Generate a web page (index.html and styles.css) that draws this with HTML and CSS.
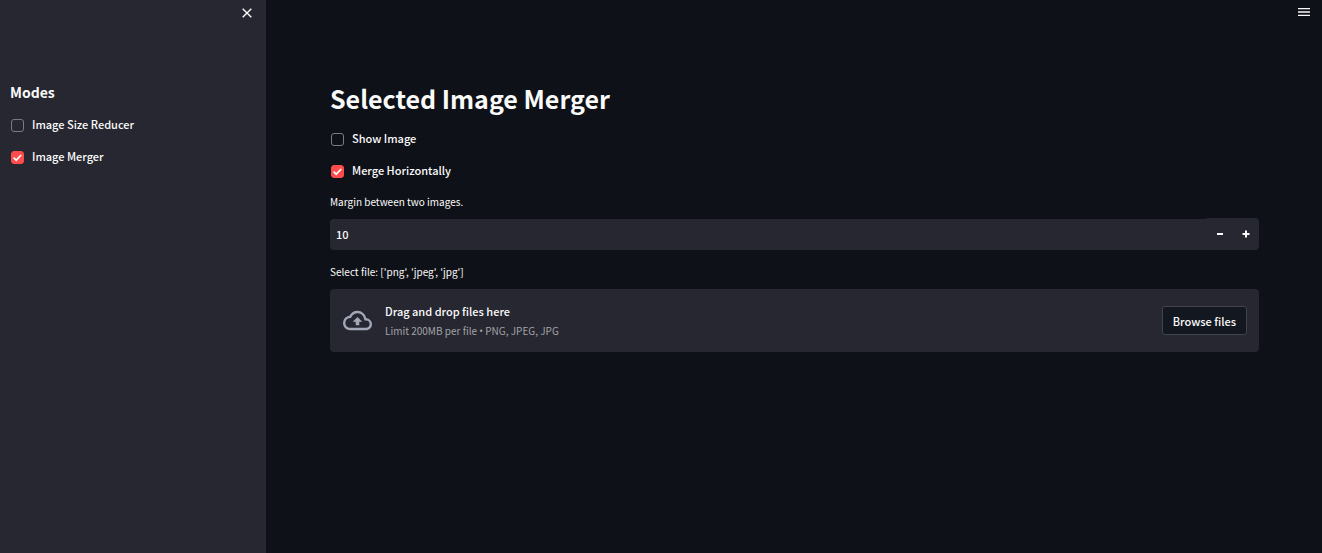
FILE: index.html
```html
<!DOCTYPE html>
<html lang="en">
<head>
<meta charset="utf-8">
<title>Image Merger</title>
<link rel="stylesheet" href="styles.css">
</head>
<body>
<div class="app">
  <aside class="sidebar">
    <div class="sidebar-top">
      <button class="icon-button" type="button" aria-label="Close sidebar">
        <svg width="10" height="10" viewBox="0 0 10 10" fill="none" stroke="currentColor" stroke-width="1.4"><path d="M.7.7l8.6 8.6M9.3.7L.7 9.3"/></svg>
      </button>
    </div>
    <h2 class="modes-title">Modes</h2>
    <div class="checks">
      <label class="check"><input type="checkbox">Image Size Reducer</label>
      <label class="check"><input type="checkbox" checked>Image Merger</label>
    </div>
  </aside>
  <main class="main">
    <header class="toolbar">
      <button class="icon-button" type="button" aria-label="Menu">
        <svg width="12" height="8" viewBox="0 0 12 8" fill="currentColor"><path d="M0 0h12v1.3H0zM0 3.3h12v1.4H0zM0 6.7h12V8H0z"/></svg>
      </button>
    </header>
    <div class="content">
      <h1 class="title">Selected Image Merger</h1>
      <div class="checks">
        <label class="check"><input type="checkbox">Show Image</label>
        <label class="check"><input type="checkbox" checked>Merge Horizontally</label>
      </div>
      <label class="field-label" for="margin">Margin between two images.</label>
      <div class="number">
        <input id="margin" class="number-input" type="text" inputmode="numeric" value="10">
        <div class="steps">
          <button class="step" type="button" aria-label="Decrease"><svg width="8" height="8" viewBox="0 0 8 8" fill="currentColor"><path d="M1 3h6v2H1z"/></svg></button>
          <button class="step" type="button" aria-label="Increase"><svg width="8" height="8" viewBox="0 0 8 8" fill="currentColor"><path d="M3 .5h2V3h2.500v2H5v2.500H3V5H.5V3H3z"/></svg></button>
        </div>
      </div>
      <div class="field-label" id="files-label">Select file: ['png', 'jpeg', 'jpg']</div>
      <section class="dropzone" aria-labelledby="files-label">
        <svg class="cloud" width="29" height="29" viewBox="0 0 24 24" fill="currentColor"><path d="M19.35 10.04A7.49 7.49 0 0 0 12 4C9.11 4 6.6 5.64 5.35 8.04A5.994 5.994 0 0 0 0 14c0 3.31 2.69 6 6 6h13c2.76 0 5-2.24 5-5 0-2.64-2.05-4.78-4.65-4.96zM19 18H6c-2.21 0-4-1.79-4-4 0-2.05 1.53-3.76 3.56-3.97l1.07-.11.5-.95A5.469 5.469 0 0 1 12 6c2.62 0 4.88 1.86 5.39 4.43l.3 1.5 1.53.11A2.98 2.98 0 0 1 22 15c0 1.65-1.35 3-3 3zM8 13h2.55v3h2.9v-3H16l-4-4z"/></svg>
        <div class="drop-text">
          <span class="drop-main">Drag and drop files here</span>
          <small class="drop-note">Limit 200MB per file <span class="bullet">•</span> PNG, JPEG, JPG</small>
        </div>
        <button class="browse" type="button">Browse files</button>
      </section>
    </div>
  </main>
</div>
</body>
</html>
```
FILE: styles.css
```css
* { box-sizing: border-box; }

body {
  margin: 0;
  background: #0e1117;
  color: #fafafa;
  font: 500 11px/20px "Noto Sans CJK SC", "Noto Sans", sans-serif;
}

button, input { font: inherit; color: inherit; }
button { cursor: pointer; }

.app { display: flex; min-height: 100vh; }

.sidebar {
  flex: 0 0 266px;
  background: #262730;
  padding: 0 10px;
}

.sidebar-top, .toolbar {
  display: flex;
  justify-content: flex-end;
  align-items: center;
}
.sidebar-top { height: 26px; }
.toolbar { height: 24px; padding-right: 8px; }

.icon-button {
  display: flex;
  padding: 4px;
  border: 0;
  background: none;
}

.modes-title {
  margin: 56px 0 11px;
  font-size: 14px;
  line-height: 21px;
  font-weight: 700;
}

.checks { display: grid; gap: 12px; justify-items: start; }

.check { display: flex; align-items: center; gap: 8px; }

.check input {
  appearance: none;
  width: 13px;
  height: 13px;
  margin: 3px 0 0 1px;
  border: 1px solid #7a7b83;
  border-radius: 3px;
}
.check input:checked {
  border-color: #ff4b4b;
  background: #ff4b4b url("data:image/svg+xml,%3Csvg xmlns='http://www.w3.org/2000/svg' viewBox='0 0 11 11'%3E%3Cpath d='M1.6 5.6l2.6 2.6 5-5.2' fill='none' stroke='%23fafafa' stroke-width='1.8'/%3E%3C/svg%3E") center / 11px no-repeat;
}

.main { flex: 1; min-width: 0; }

.content { padding: 55px 63px 0 64px; }

.title {
  margin: 0 0 11px;
  font-size: 25px;
  line-height: 38px;
  font-weight: 700;
}

.field-label {
  display: block;
  margin: 15px 0 9px;
  font-size: 10px;
  line-height: 14px;
  font-weight: 400;
}

.number {
  display: flex;
  align-items: flex-end;
}
.number-input {
  flex: 1;
  min-width: 0;
  height: 31px;
  padding: 0 6px 2px;
  border: 0;
  border-radius: 4px 0 0 4px;
  background: #262730;
}
.steps {
  display: flex;
  height: 32px;
  border-radius: 0 4px 4px 0;
  background: #262730;
}
.step {
  display: flex;
  align-items: center;
  justify-content: center;
  width: 26px;
  padding: 0;
  border: 0;
  background: none;
}

.dropzone {
  display: flex;
  align-items: center;
  margin-top: 10px;
  padding: 12px 12px 12px 13px;
  border-radius: 4px;
  background: #262730;
}
.cloud { margin-right: 13px; color: #a3a8b8; }
.drop-text { display: flex; flex-direction: column; flex: 1; }
.drop-main { line-height: 21px; }
.drop-note { font-size: 10px; line-height: 18px; font-weight: 400; color: #a3a3a8; }
.bullet { font-family: "Open Sans", sans-serif; line-height: 1; }
.browse {
  height: 29px;
  padding: 0 10px;
  border: 1px solid #41434b;
  border-radius: 3px;
  background: #131720;
}
```
